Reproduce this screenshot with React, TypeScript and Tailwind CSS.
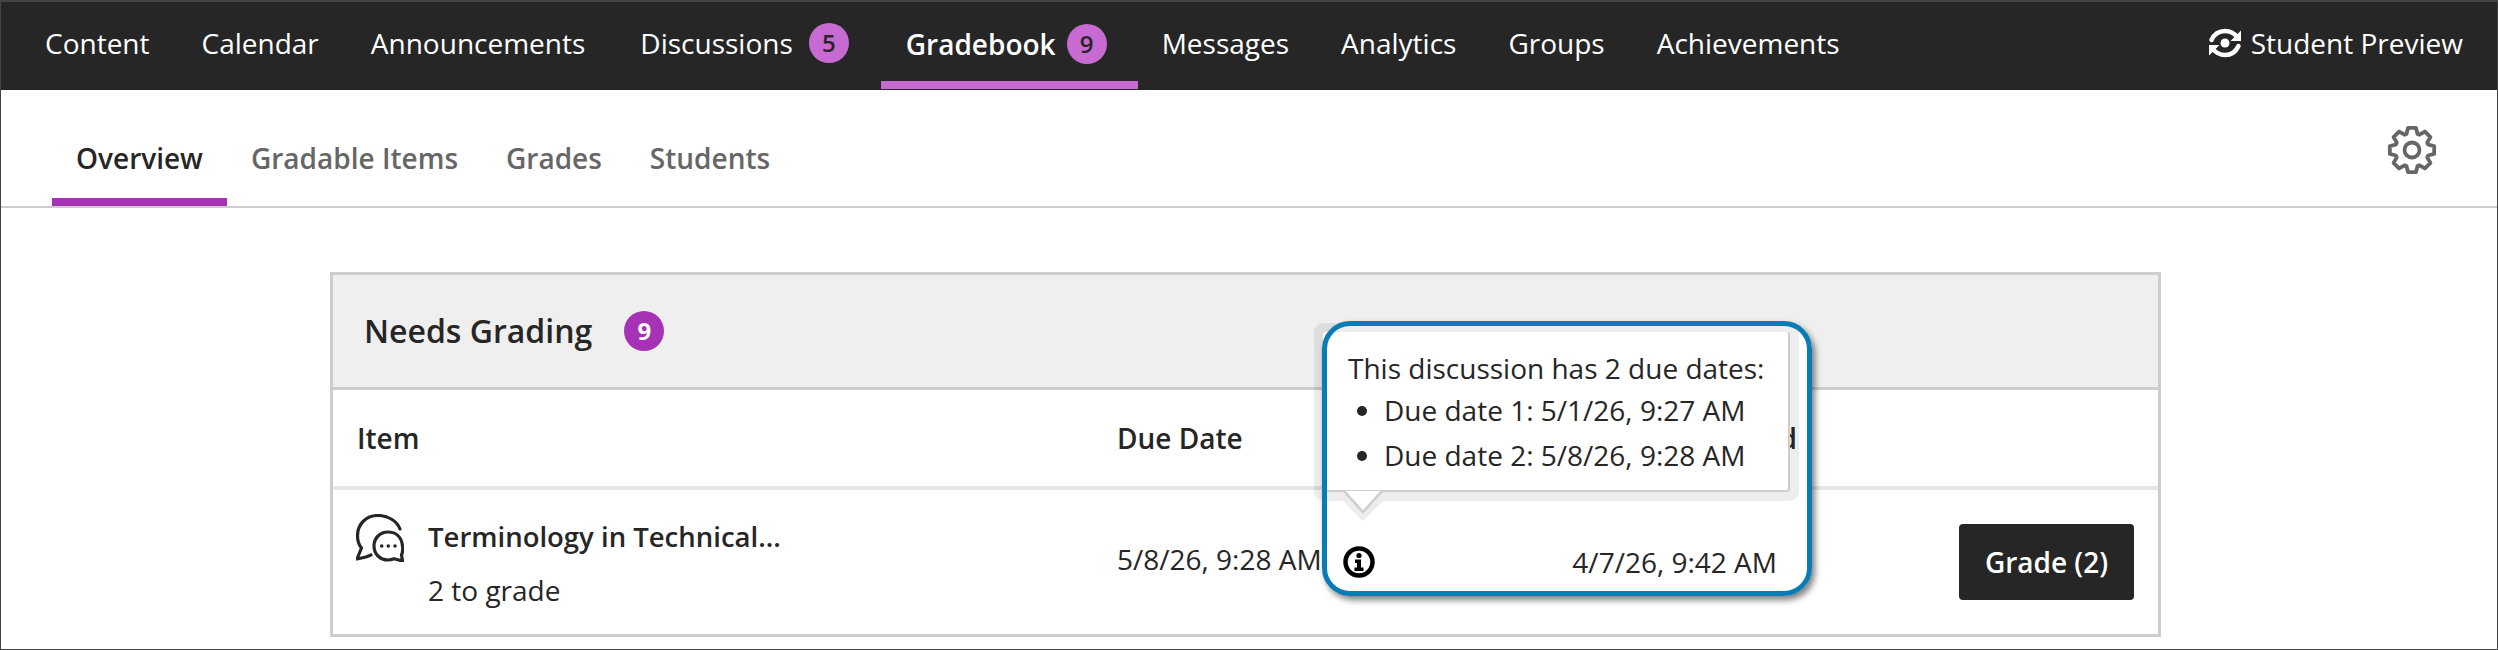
import React from "react";

const navItems = [
  { label: "Content", cls: "px-[26px]" },
  { label: "Calendar", cls: "px-[26px]" },
  { label: "Announcements", cls: "px-[26px]" },
  { label: "Discussions", badge: "5", cls: "pl-[29px] pr-[32px]" },
  { label: "Gradebook", badge: "9", active: true, cls: "" },
  { label: "Messages", cls: "pl-[24px] pr-[26px]" },
  { label: "Analytics", cls: "px-[26px]" },
  { label: "Groups", cls: "px-[26px]" },
  { label: "Achievements", cls: "px-[26px]" },
];

const tabs = ["Overview", "Gradable Items", "Grades", "Students"];

// eight teeth, walked round the wheel
const gearPath = Array.from({ length: 8 }, (_, i) => {
  const a = i * 45 - 90;
  const pt = (deg: number, r: number) => {
    const rad = ((a + deg) * Math.PI) / 180;
    return `${(25 + r * Math.cos(rad)).toFixed(2)} ${(25 + r * Math.sin(rad)).toFixed(2)}`;
  };
  return `${pt(-19, 17)} L${pt(-10, 22.5)} L${pt(10, 22.5)} L${pt(19, 17)}`;
}).join(" L");

const PreviewIcon = () => (
  <svg width="34" height="30" viewBox="0 0 34 30" fill="none" className="shrink-0">
    <path d="M3.500 12C6.500 5.500 11.500 3 17 3c5 0 9 2 12 6" stroke="#fff" strokeWidth="4.500" strokeLinecap="round" />
    <path d="M33 2.500v10.500H22.500z" fill="#fff" />
    <path d="M30.500 18C27.500 24.500 22.500 27 17 27c-5 0-9-2-12-6" stroke="#fff" strokeWidth="4.500" strokeLinecap="round" />
    <path d="M1 27.500V17h10.500z" fill="#fff" />
    <circle cx="17" cy="15" r="4.500" fill="#fff" />
  </svg>
);

const GearIcon = () => (
  <svg width="50" height="50" viewBox="0 0 50 50" fill="none" stroke="#666" strokeWidth="3.800" strokeLinejoin="round">
    <path d={`M${gearPath}z`} />
    <circle cx="25" cy="25" r="7.500" />
  </svg>
);

const DiscussionIcon = () => (
  <svg width="48" height="48" viewBox="0 0 48 48" fill="none" stroke="#262626" strokeWidth="3.200" strokeLinecap="round" strokeLinejoin="round" className="shrink-0">
    <path d="M44 15C41 7 32 1.500 22 1.500 10 1.500 1.500 10 1.500 22c0 5 1.500 9 4 12L1 45l9-2 5-2" />
    <path d="M32 18c-8 0-14 6-14 14s6 14 14 14c2 0 4-.4 6-1.300l8.500 2.300-1-6c1.200-2.800 1.500-6 1-9C45.500 23 40 18 32 18z" />
    <circle cx="25.700" cy="32" r="1.800" fill="#262626" stroke="none" />
    <circle cx="32.300" cy="32" r="1.800" fill="#262626" stroke="none" />
    <circle cx="39" cy="32" r="1.800" fill="#262626" stroke="none" />
  </svg>
);

const InfoIcon = () => (
  <svg width="32" height="32" viewBox="0 0 32 32" fill="none" className="shrink-0">
    <circle cx="16" cy="16" r="13.500" stroke="#000" strokeWidth="4.500" />
    <circle cx="16" cy="9.500" r="2.600" fill="#000" />
    <path d="M12 13.500h6v8h2.500V25h-9v-3.500H14V17h-2z" fill="#000" />
  </svg>
);

export default function App() {
  return (
    <div className="relative h-[650px] w-[2498px] overflow-hidden border-x border-b border-[#444] bg-white font-['Open_Sans',sans-serif] text-[#262626]">
      <nav className="flex h-[90px] items-start border-t-2 border-[#444] bg-[#262626] pl-[18px] pr-[34px] text-[28px] text-white">
        {navItems.map((item) =>
          item.active ? (
            <div
              key={item.label}
              className="flex h-[87px] items-center gap-[11px] border-b-[8px] border-[#c76bd2] pl-[25px] pr-[31px] pt-[4px] font-semibold"
            >
              <span>{item.label}</span>
              <span className="flex size-[40px] items-center justify-center rounded-full bg-[#c76bd2] text-[24px] text-[#262626]">
                {item.badge}
              </span>
            </div>
          ) : (
            <div key={item.label} className={`flex h-[87px] items-center gap-[16px] pb-[5px] ${item.cls}`}>
              <span>{item.label}</span>
              {item.badge && (
                <span className="flex size-[40px] items-center justify-center rounded-full bg-[#c76bd2] text-[24px] font-semibold text-[#262626]">
                  {item.badge}
                </span>
              )}
            </div>
          ),
        )}
        <div className="ml-auto flex h-[87px] items-center gap-[9px] pb-[5px]">
          <PreviewIcon />
          <span>Student Preview</span>
        </div>
      </nav>

      <div className="flex h-[118px] items-end border-b-2 border-[#cdcdcd] pl-[51px] pr-[60px]">
        {tabs.map((tab, i) => (
          <div
            key={tab}
            className={
              i === 0
                ? "flex h-[88px] items-start border-b-[8px] border-[#a633b5] px-[24px] pt-[19px] text-[28px] font-semibold text-[#262626]"
                : "flex h-[88px] items-start px-[24px] pt-[19px] text-[28px] font-semibold text-[#666]"
            }
          >
            {tab}
          </div>
        ))}
        <div className="ml-auto mt-[4px] self-center">
          <GearIcon />
        </div>
      </div>

      <div className="ml-[329px] mt-[64px] h-[365px] w-[1831px] border-[3px] border-[#cdcdcd]">
        <div className="flex h-[112px] items-center gap-[32px] bg-[#efefef] pl-[31px]">
          <span className="text-[32px] font-semibold">Needs Grading</span>
          <span className="flex size-[40px] items-center justify-center rounded-full bg-[#a633b5] text-[24px] font-bold text-white">
            9
          </span>
        </div>

        <div className="flex h-[103px] items-center border-t-[3px] border-b-[4px] border-t-[#cdcdcd] border-b-[#e5e5e5] pl-[24px] text-[28px] font-semibold">
          <span className="w-[760px]">Item</span>
          <span className="w-[300px]">Due Date</span>
          <span className="relative z-[2] w-[380px] text-right">d</span>
        </div>

        <div className="flex h-[144px] items-start pl-[23px]">
          <div className="flex w-[761px] pt-[24px]">
            <DiscussionIcon />
            <div className="ml-[24px] mt-[-1px]">
              <div className="text-[27.5px] font-semibold leading-[48px]">Terminology in Technical...</div>
              <div className="mt-[5px] text-[28px] leading-[48px]">2 to grade</div>
            </div>
          </div>
          <span className="mt-[47px] w-[205px] text-[28px] leading-[44px]">5/8/26, 9:28 AM</span>
          <div className="relative z-[2] ml-[21px] mt-[50px] flex w-[434px] items-center justify-between text-[28px] leading-[44px]">
            <InfoIcon />
            <span>4/7/26, 9:42 AM</span>
          </div>
          <button className="ml-[182px] mt-[34px] h-[76px] w-[175px] rounded-[4px] bg-[#262626] text-[28px] font-semibold text-white">
            Grade (2)
          </button>
        </div>
      </div>

      {/* annotation over the table */}
      <div className="absolute left-[1321px] top-[321px] z-[1] h-[275px] w-[490px] rounded-[28px] bg-white" />
      <div className="absolute left-[1322px] top-[332px] z-[3] h-[160px] w-[467px] rounded-[3px] border-r-2 border-b-2 border-[#cdcdcd] bg-white pl-[25px] pt-[16px] text-[28px] shadow-[0_0_0_9px_rgba(0,0,0,0.07)]">
        <p className="leading-[40px]">This discussion has 2 due dates:</p>
        <ul className="ml-[36px] list-disc leading-[45px]">
          <li>Due date 1: 5/1/26, 9:27 AM</li>
          <li>Due date 2: 5/8/26, 9:28 AM</li>
        </ul>
        <svg width="58" height="32" viewBox="0 0 58 32" className="absolute left-[11px] top-[158px]">
          <path d="M9 11h40L29 31z" fill="rgba(0,0,0,0.07)" />
          <path d="M10 1L29 22L48 1z" fill="#fff" />
          <path d="M10 1L29 22L48 1" fill="none" stroke="#cdcdcd" strokeWidth="2.500" />
        </svg>
      </div>
      <div className="absolute left-[1321px] top-[321px] z-[4] h-[275px] w-[490px] rounded-[28px] border-[5px] border-[#0a7cb5] shadow-[3px_4px_6px_rgba(0,0,0,0.5)]" />
    </div>
  );
}
